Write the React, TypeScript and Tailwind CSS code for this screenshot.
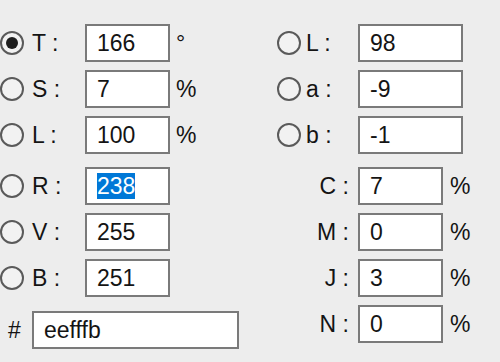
import React from "react";

type Row = {
    label: string;
    value: string;
    unit?: string;
    checked?: boolean;
    selected?: boolean;
};

const font = { fontFamily: '"Liberation Sans", Arial, sans-serif' };

const topLeft: Row[] = [
    { label: "T", value: "166", unit: "°", checked: true },
    { label: "S", value: "7", unit: "%" },
    { label: "L", value: "100", unit: "%" },
];

const topRight: Row[] = [
    { label: "L", value: "98" },
    { label: "a", value: "-9" },
    { label: "b", value: "-1" },
];

const rgb: Row[] = [
    { label: "R", value: "238", selected: true },
    { label: "V", value: "255" },
    { label: "B", value: "251" },
];

const cmyk: Row[] = [
    { label: "C", value: "7", unit: "%" },
    { label: "M", value: "0", unit: "%" },
    { label: "J", value: "3", unit: "%" },
    { label: "N", value: "0", unit: "%" },
];

const Radio: React.FC<{ checked?: boolean }> = ({ checked }) => (
    <div className="flex h-[24px] w-[24px] shrink-0 items-center justify-center rounded-full border-2 border-[#5a5a5a] bg-[#f2f2f2]">
        {checked && <div className="h-[12px] w-[12px] rounded-full bg-[#1e1e1e]" />}
    </div>
);

const Box: React.FC<{ value: string; width: string; selected?: boolean }> = ({ value, width, selected }) => (
    <div className={`flex h-[38px] shrink-0 items-center border-2 border-[#7a7a7a] bg-white pl-[10px] ${width}`}>
        {selected ? (
            <span className="bg-[#0078d7] leading-[26px] text-white">{value}</span>
        ) : (
            <span className="leading-none">{value}</span>
        )}
    </div>
);

const App: React.FC = () => {
    return (
        <div
            className="h-[362px] w-[500px] overflow-hidden bg-[#ededed] pt-[24px] text-[23px] text-[#141414]"
            style={font}
        >
            <div className="flex">
                <div className="flex w-[277px] flex-col gap-[8px]">
                    {topLeft.map((r) => (
                        <div className="flex h-[38px] items-center" key={r.label}>
                            <Radio checked={r.checked} />
                            <span className="ml-[8px] w-[53px]">{r.label} :</span>
                            <Box value={r.value} width="w-[85px]" />
                            <span className="ml-[6px]">{r.unit}</span>
                        </div>
                    ))}
                </div>
                <div className="flex flex-col gap-[8px]">
                    {topRight.map((r) => (
                        <div className="flex h-[38px] items-center" key={r.label}>
                            <Radio />
                            <span className="ml-[5px] w-[52px]">{r.label} :</span>
                            <Box value={r.value} width="w-[105px]" />
                        </div>
                    ))}
                </div>
            </div>

            <div className="mt-[13px] flex">
                <div className="flex w-[277px] flex-col gap-[8px]">
                    {rgb.map((r) => (
                        <div className="flex h-[38px] items-center" key={r.label}>
                            <Radio />
                            <span className="ml-[8px] w-[53px]">{r.label} :</span>
                            <Box value={r.value} width="w-[85px]" selected={r.selected} />
                        </div>
                    ))}
                    <div className="mt-[6px] flex h-[38px] items-center">
                        <span className="ml-[8px] w-[24px]">#</span>
                        <Box value="eefffb" width="w-[207px]" />
                    </div>
                </div>
                <div className="flex flex-col gap-[8px]">
                    {cmyk.map((r) => (
                        <div className="flex h-[38px] items-center" key={r.label}>
                            <span className="w-[81px] pr-[9px] text-right">{r.label} :</span>
                            <Box value={r.value} width="w-[85px]" />
                            <span className="ml-[7px]">{r.unit}</span>
                        </div>
                    ))}
                </div>
            </div>
        </div>
    );
};

export default App;
